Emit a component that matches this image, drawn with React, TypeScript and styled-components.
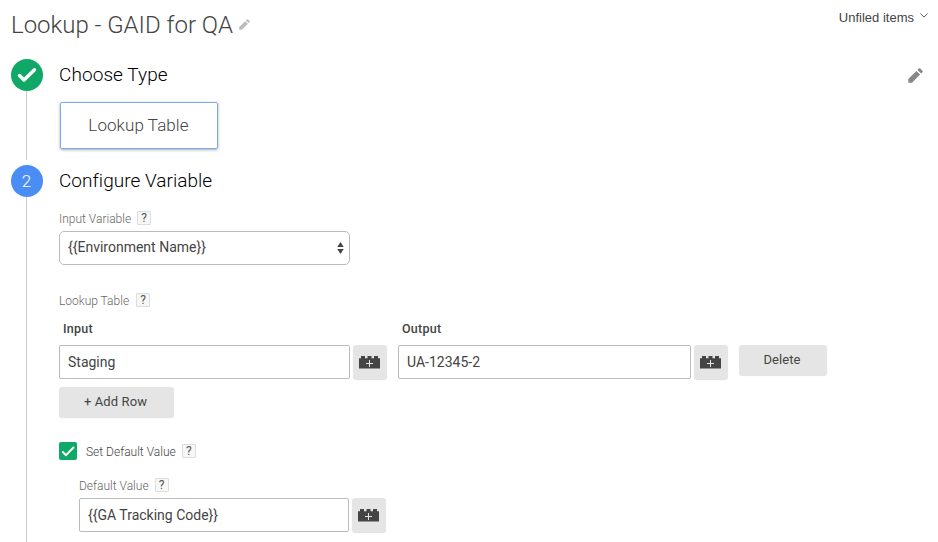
import React from 'react';
import styled, { createGlobalStyle } from 'styled-components';

const GlobalStyle = createGlobalStyle`
  *, *::before, *::after { box-sizing: border-box; }
  body {
    margin: 0;
    background: #fff;
    color: #444;
    font-family: Roboto, "Liberation Sans", sans-serif;
    overflow: hidden;
  }
  svg { display: block; flex: none; }
  input, select, button { font: inherit; color: inherit; margin: 0; }
`;

const Page = styled.main`
  width: 938px;
  height: 542px;
  padding-left: 11px;
  overflow: hidden;
  display: flex;
  flex-direction: column;
`;

const Header = styled.header`
  height: 59px;
  flex: none;
  display: flex;
  align-items: flex-start;
  padding-right: 10px;
`;

const Title = styled.h1`
  margin: 9px 6px 0 0;
  font-size: 24px;
  line-height: 32px;
  font-weight: 300;
  letter-spacing: -0.02px;
  color: #444;
  white-space: nowrap;
`;

const TitlePencil = styled.span`
  padding-top: 19px;
`;

const Folder = styled.div`
  margin-left: auto;
  padding-top: 9px;
  display: flex;
  align-items: center;
  gap: 6px;
  font: 13px/18px "Liberation Sans", sans-serif;
  color: #444;
`;

const Chevron = styled.svg`
  margin-top: -5px;
`;

const Step = styled.section<{ $height: number }>`
  height: ${(p) => p.$height}px;
  flex: none;
  display: flex;
`;

const Rail = styled.div<{ $gap: number }>`
  width: 32px;
  margin-right: 16px;
  padding-bottom: ${(p) => p.$gap}px;
  display: flex;
  flex-direction: column;
  flex: none;
`;

const Badge = styled.div<{ $color: string }>`
  width: 32px;
  height: 32px;
  flex: none;
  border-radius: 50%;
  background: ${(p) => p.$color};
  color: #fff;
  display: flex;
  align-items: center;
  justify-content: center;
  padding-right: 1px;
  font-size: 17px;
  font-weight: 300;
`;

const RailLine = styled.div`
  width: 1px;
  margin-left: 15px;
  flex: 1;
  background: #ccc;
`;

const Content = styled.div`
  flex: 1;
  display: flex;
  flex-direction: column;
  align-items: flex-start;
`;

const StepHeading = styled.div`
  align-self: stretch;
  height: 32px;
  padding-right: 15px;
  display: flex;
  align-items: center;
  justify-content: space-between;
`;

const StepTitle = styled.h2<{ $spacing: number }>`
  margin: 0;
  font-size: 19px;
  line-height: 32px;
  font-weight: 300;
  letter-spacing: ${(p) => p.$spacing}px;
  color: #000;
`;

const TypeCard = styled.div`
  width: 158px;
  height: 47px;
  margin: 11px 0 0 1px;
  padding-right: 1px;
  border: 1px solid #7baaf7;
  border-radius: 2px;
  box-shadow: 0 1px 3px rgba(0, 0, 0, 0.35);
  font-size: 17px;
  line-height: 45px;
  font-weight: 300;
  letter-spacing: 0.08px;
  text-align: center;
  color: #444;
`;

const FieldLabel = styled.div<{ $top: number; $tone?: string; $gap?: number }>`
  height: 14px;
  margin-top: ${(p) => p.$top}px;
  display: flex;
  align-items: center;
  gap: ${(p) => p.$gap ?? 6}px;
  font-size: 12px;
  line-height: 14px;
  font-weight: 300;
  color: ${(p) => p.$tone ?? '#666'};
`;

const LabelText = styled.span`
  padding-top: 2px;
`;

const HelpBox = styled.span`
  width: 14px;
  height: 14px;
  border: 1px solid #ddd;
  border-radius: 1px;
  background: #f7f7f7;
  font-size: 12px;
  line-height: 13px;
  font-weight: 400;
  text-align: center;
  color: #555;
`;

const SelectBox = styled.div`
  width: 291px;
  height: 34px;
  margin-top: 6px;
  padding: 0 5px 0 8px;
  border: 1px solid #bbb;
  border-radius: 5px;
  display: flex;
  align-items: center;
  justify-content: space-between;
  font-size: 14px;
  line-height: 30px;
`;

const SelectText = styled.span`
  padding-bottom: 2px;
`;

const TableHead = styled.div`
  height: 16px;
  margin-top: 14px;
  padding-left: 4px;
  display: grid;
  grid-template-columns: 339px 200px;
  font-size: 12.5px;
  line-height: 16px;
  font-weight: 500;
  letter-spacing: 0.25px;
`;

const Row = styled.div<{ $top: number; $indent?: number }>`
  margin: ${(p) => p.$top}px 0 0 ${(p) => p.$indent ?? 0}px;
  display: flex;
  align-items: flex-start;
`;

const TextInput = styled.input<{ $width: number }>`
  width: ${(p) => p.$width}px;
  height: 34px;
  margin-right: 3px;
  padding: 0 8px;
  border: 1px solid #bbb;
  border-radius: 2px;
  background: #fff;
  outline: none;
  && { font-size: 14px; }
`;

const Button = styled.button<{ $width: number; $height: number; $after?: number }>`
  width: ${(p) => p.$width}px;
  height: ${(p) => p.$height}px;
  margin-right: ${(p) => p.$after ?? 0}px;
  padding: 0 2px 1px 0;
  border: 0;
  border-radius: 3px;
  background: #e5e5e5;
  box-shadow: 0 1px 1px rgba(0, 0, 0, 0.12);
  display: flex;
  align-items: center;
  justify-content: center;
  && { font-size: 13px; letter-spacing: 0.1px; }
`;

const Checkbox = styled.span`
  width: 18px;
  height: 18px;
  margin-right: 9px;
  border-radius: 2px;
  background: #0fa866;
`;

const Pencil = ({ size, color }: { size: number; color: string }) => (
  <svg width={size} height={size} viewBox="0 0 15 15" fill={color}>
    <path d="M0.3 11L8.4 2.9L12.1 6.6L4 14.7H0.3zM9.4 1.9L10.7 0.6Q11.5 -0.2 12.3 0.6L14.4 2.7Q15.2 3.5 14.4 4.3L13.1 5.6z" />
  </svg>
);

const Brick = () => (
  <svg width="21" height="15" viewBox="0 0 21 15">
    <path d="M0 14.5V4.2H2V2H6V4.2H8.5V2H12.5V4.2H15V2H19V4.2H21V14.5z" fill="#444" />
    <path d="M7 9.5h7M10.5 6v7" stroke="#e5e5e5" />
  </svg>
);

const VariableButton = ({ after }: { after?: number }) => (
  <Button $width={34} $height={34} $after={after} aria-label="Insert variable">
    <Brick />
  </Button>
);

const Help = () => <HelpBox>?</HelpBox>;

export default function App() {
  return (
    <Page>
      <GlobalStyle />
      <Header>
        <Title>Lookup - GAID for QA</Title>
        <TitlePencil>
          <Pencil size={11} color="#bbb" />
        </TitlePencil>
        <Folder>
          Unfiled items
          <Chevron width="8" height="5" viewBox="0 0 8 5" fill="none" stroke="#555">
            <path d="M0.4 0.5L4 4.1L7.6 0.5" />
          </Chevron>
        </Folder>
      </Header>

      <Step $height={106}>
        <Rail $gap={5}>
          <Badge $color="#0fa866">
            <svg width="20" height="16" viewBox="0 0 20 16" fill="none" stroke="#fff" strokeWidth="3.4" strokeLinecap="round" strokeLinejoin="round">
              <path d="M2.5 8.5L7 13L17.5 2.8" />
            </svg>
          </Badge>
          <RailLine />
        </Rail>
        <Content>
          <StepHeading>
            <StepTitle $spacing={0.08}>Choose Type</StepTitle>
            <Pencil size={15} color="#888" />
          </StepHeading>
          <TypeCard>Lookup Table</TypeCard>
        </Content>
      </Step>

      <Step $height={377}>
        <Rail $gap={0}>
          <Badge $color="#4a8ef5">2</Badge>
          <RailLine />
        </Rail>
        <Content>
          <StepHeading>
            <StepTitle $spacing={0.03}>Configure Variable</StepTitle>
          </StepHeading>

          <FieldLabel $top={14}>
            <LabelText>Input Variable</LabelText> <Help />
          </FieldLabel>
          <SelectBox>
            <SelectText>{'{{Environment Name}}'}</SelectText>
            <svg width="7" height="12" viewBox="0 0 7 12" fill="#444">
              <path d="M3.5 0L6.7 5H0.3zM3.5 12L0.3 7H6.7z" />
            </svg>
          </SelectBox>

          <FieldLabel $top={28} $gap={7}>
            <LabelText>Lookup Table</LabelText> <Help />
          </FieldLabel>
          <TableHead>
            <span>Input</span>
            <span>Output</span>
          </TableHead>
          <Row $top={8}>
            <TextInput $width={291} defaultValue="Staging" />
            <VariableButton after={11} />
            <TextInput $width={293} defaultValue="UA-12345-2" />
            <VariableButton after={11} />
            <Button $width={88} $height={30}>Delete</Button>
          </Row>
          <Row $top={8}>
            <Button $width={115} $height={30}>+ Add Row</Button>
          </Row>

          <Row $top={25}>
            <Checkbox>
              <svg width="18" height="18" viewBox="0 0 18 18" fill="none" stroke="#fff" strokeWidth="2">
                <path d="M3.3 9.5L7 13.2L15 5" />
              </svg>
            </Checkbox>
            <FieldLabel $top={2} $tone="#444">
              <LabelText>Set Default Value</LabelText> <Help />
            </FieldLabel>
          </Row>
          <Row $top={18} $indent={20}>
            <FieldLabel $top={0}>
              <LabelText>Default Value</LabelText> <Help />
            </FieldLabel>
          </Row>
          <Row $top={6} $indent={20}>
            <TextInput $width={270} defaultValue="{{GA Tracking Code}}" />
            <VariableButton />
          </Row>
        </Content>
      </Step>
    </Page>
  );
}
